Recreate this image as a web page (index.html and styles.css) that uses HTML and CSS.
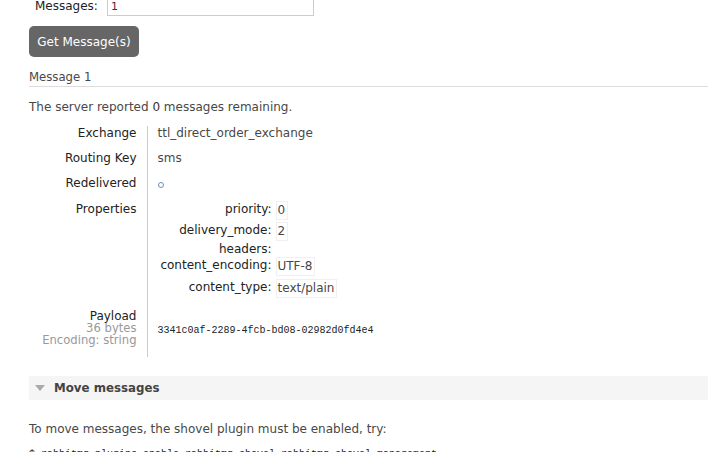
FILE: index.html
```html
<!DOCTYPE html>
<html>
<head>
<meta charset="utf-8">
<link rel="stylesheet" href="styles.css">
</head>
<body>
<div class="page">
  <div class="form-row">
    <label class="form-label">Messages:</label>
    <input class="form-input" type="text" value="1">
  </div>
  <button class="btn">Get Message(s)</button>
  <h3 class="msg-title">Message 1</h3>
  <p class="remaining">The server reported <b>0</b> messages remaining.</p>
  <table class="facts">
    <tr class="row">
      <th class="key">Exchange</th>
      <td class="val">ttl_direct_order_exchange</td>
    </tr>
    <tr class="row">
      <th class="key">Routing Key</th>
      <td class="val">sms</td>
    </tr>
    <tr class="row">
      <th class="key">Redelivered</th>
      <td class="val"><span class="dot"></span></td>
    </tr>
    <tr class="row row-props">
      <th class="key">Properties</th>
      <td class="val">
        <table class="props">
          <tr class="p-row h21"><th class="p-key">priority:</th><td class="p-val"><span class="box">0</span></td></tr>
          <tr class="p-row h19"><th class="p-key">delivery_mode:</th><td class="p-val"><span class="box">2</span></td></tr>
          <tr class="p-row h16"><th class="p-key">headers:</th><td class="p-val"></td></tr>
          <tr class="p-row h22"><th class="p-key">content_encoding:</th><td class="p-val"><span class="box">UTF-8</span></td></tr>
          <tr class="p-row h22"><th class="p-key">content_type:</th><td class="p-val"><span class="box">text/plain</span></td></tr>
        </table>
      </td>
    </tr>
    <tr class="row row-payload">
      <th class="key"><span class="pl-line">Payload</span><span class="pl-line sub">36 bytes</span><span class="pl-line sub">Encoding: string</span></th>
      <td class="val"><code class="payload">3341c0af-2289-4fcb-bd08-02982d0fd4e4</code></td>
    </tr>
  </table>
  <div class="section-h"><span class="tri"></span>Move messages</div>
  <p class="move-note">To move messages, the shovel plugin must be enabled, try:</p>
  <pre class="cmd">$ rabbitmq-plugins enable rabbitmq_shovel rabbitmq_shovel_management</pre>
</div>
</body>
</html>
```

FILE: styles.css
```css
* { box-sizing: border-box; }
html, body { margin: 0; padding: 0; }
body {
  font-family: "DejaVu Sans", Verdana, sans-serif;
  font-size: 12px;
  color: #484848;
  background: #fff;
  width: 708px;
  height: 452px;
  overflow: hidden;
}
.page { padding-left: 29px; margin-top: -4px; }

.form-row { display: flex; align-items: center; padding-left: 6px; height: 20px; }
.form-label { width: 72px; color: #222; font-size: 12px; }
.form-input {
  width: 207px; height: 20px; border: 1px solid #ccc;
  font: 11px "DejaVu Sans", sans-serif; color: #6a1b3a; padding: 0 3px;
  margin: 0; outline: none;
}

.btn {
  display: block; margin-top: 10px; height: 31px; width: 110px;
  background: #666; color: #fff; border: none; border-radius: 5px;
  font: 12px "DejaVu Sans", sans-serif; padding: 0;
}

.msg-title {
  margin: 12px 0 0; font-size: 11.7px; font-weight: normal; line-height: 14px;
  padding: 1px 0 2px; border-bottom: 1px solid #ddd; color: #484848;
}

.remaining { margin: 13px 0 0; line-height: 14px; }
.remaining b { font-weight: normal; color: #333; }

.facts { border-collapse: collapse; margin-top: 12px; }
.key {
  width: 118px; text-align: right; font-weight: normal; color: #222;
  padding: 0 10px 11px 0; vertical-align: top; line-height: 14px; white-space: nowrap;
}
.val {
  border-left: 1px solid #ccc; padding: 0 10px 11px 10px;
  vertical-align: top; line-height: 14px; color: #484848;
}
.dot {
  display: inline-block; width: 6px; height: 6px; border: 1px solid #6b8fb8;
  border-radius: 50%; margin-top: 6px;
}
.row-props .key { padding-bottom: 0; padding-top: 0; }
.row-props .val { padding-bottom: 0; padding-top: 0; }
.row-props .props { margin-top: -1px; }

.props { border-collapse: collapse; }
.p-key {
  width: 118px; text-align: right; font-weight: normal; color: #222;
  padding: 1px 4px 0 0; vertical-align: top; line-height: 14px; white-space: nowrap;
}
.p-val { padding: 0; vertical-align: top; line-height: 14px; }
.box { display: inline-block; border: 1px solid #f0f0f0; padding: 1px 2px 2px 1px; }
.h21 { height: 21px; }
.h19 { height: 19px; }
.h16 { height: 16px; }
.h22 { height: 22px; }

.row-payload .key { padding-top: 8px; padding-bottom: 12px; }
.pl-line { display: block; height: 12px; line-height: 14px; overflow: visible; }
.pl-line.sub { font-size: 11.6px; }
.row-payload .val { vertical-align: middle; padding-top: 12px; padding-bottom: 12px; }
.sub { color: #999; }
.payload { font: 10px "Liberation Mono", monospace; color: #222; }

.section-h {
  margin-top: 19px; height: 24px; background: #f5f5f5;
  display: flex; align-items: center; padding-left: 6px;
  font-weight: bold; font-size: 11.8px; color: #444;
}
.tri {
  width: 0; height: 0; border-left: 5px solid transparent; border-right: 5px solid transparent;
  border-top: 6px solid #aaa; margin-right: 9px;
}

.move-note { margin: 22px 0 0; line-height: 14px; }
.cmd { margin: 13px 0 0; font: 10px "Liberation Mono", monospace; color: #222; }
```
